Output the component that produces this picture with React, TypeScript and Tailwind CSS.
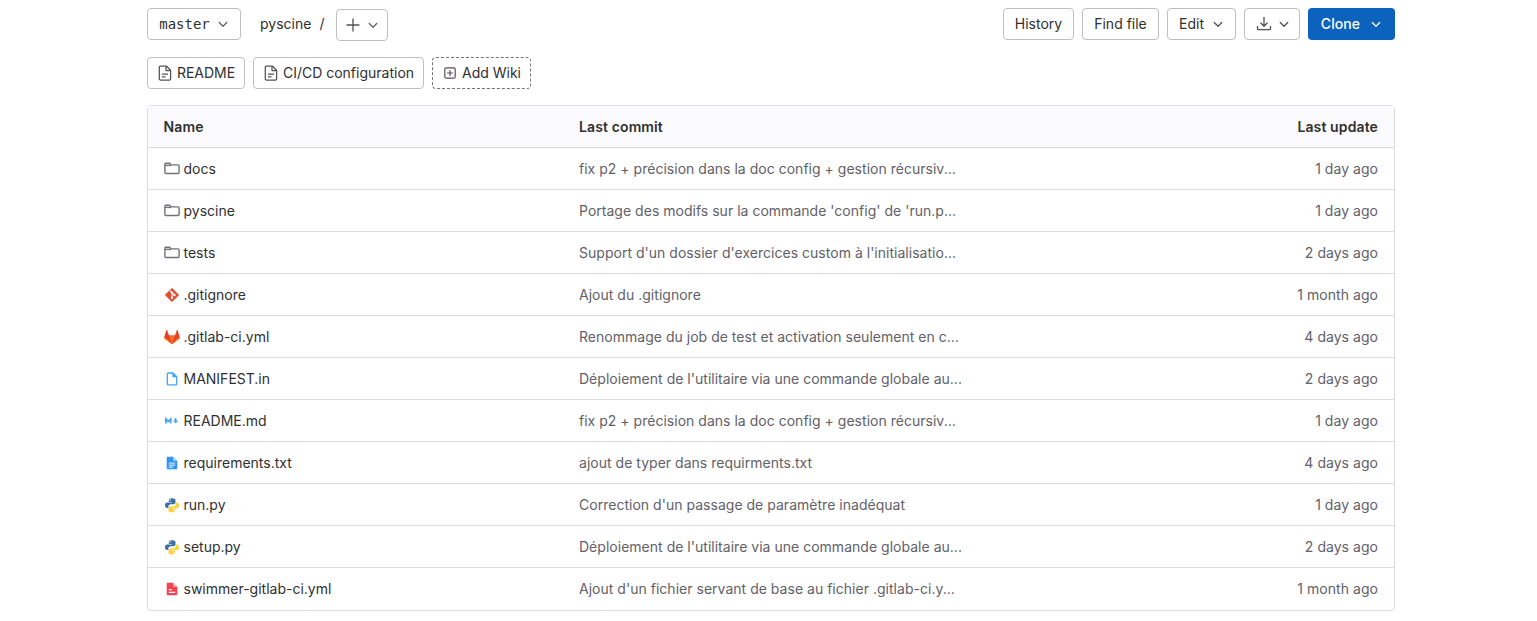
import { ReactNode } from 'react';

const ink = 'text-[#303030]';

function Chevron({ className = '' }: { className?: string }) {
  return (
    <svg viewBox="0 0 16 16" className={`w-3 h-3 ${className}`} fill="none" stroke="currentColor" strokeWidth="1.7" strokeLinecap="round" strokeLinejoin="round">
      <path d="M3 6l5 5 5-5" />
    </svg>
  );
}

function Btn({ children, className = '' }: { children: ReactNode; className?: string }) {
  return (
    <div className={`h-8 flex items-center justify-center rounded border border-[#bfbfc3] bg-white text-sm ${ink} ${className}`}>
      {children}
    </div>
  );
}

function DocIcon() {
  return (
    <svg viewBox="0 0 16 16" className="w-4 h-4 text-[#535158]" fill="none" stroke="currentColor" strokeWidth="1.25" strokeLinejoin="round">
      <path d="M3.4 1h5.9l4.3 4.3v8.6a1.1 1.1 0 0 1-1.1 1.1H3.4a1.1 1.1 0 0 1-1.1-1.1V2.1A1.1 1.1 0 0 1 3.4 1z" />
      <path d="M9 1.2v4.4h4.4" />
      <path d="M5 9h6M5 11.8h3.5" />
    </svg>
  );
}

function FolderIcon() {
  return (
    <svg viewBox="0 0 16 16" className="w-4 h-4 text-[#737278]" fill="none" stroke="currentColor" strokeWidth="1.4" strokeLinejoin="round">
      <path d="M.9 3.2a.9.9 0 0 1 .9-.9h3.8l1.5 1.6h7.1a.9.9 0 0 1 .9.9v6.8a.9.9 0 0 1-.9.9H1.8a.9.9 0 0 1-.9-.9z" />
      <path d="M1 4.4h6" />
    </svg>
  );
}

function GitIcon() {
  return (
    <svg viewBox="0 0 16 16" className="w-4 h-4">
      <path d="M8 1.4L14.6 8 8 14.6 1.4 8z" fill="#e64a2e" stroke="#e64a2e" strokeWidth="1" strokeLinejoin="round" />
      <path d="M5.8 3.6L10.4 8M8 5.8v5" stroke="#fff" strokeWidth="1.1" />
      <circle cx="8" cy="5.8" r="1.2" fill="#fff" />
      <circle cx="10.4" cy="8" r="1.2" fill="#fff" />
      <circle cx="8" cy="10.8" r="1.2" fill="#fff" />
    </svg>
  );
}

function TanukiIcon() {
  return (
    <svg viewBox="0 0 16 16" className="w-4 h-4">
      <path d="M8 15.3L.5 9.7.1 8.4 2.4 1.3c.1-.4.7-.4.8 0L5 6.6h6l1.8-5.3c.1-.4.7-.4.8 0l2.3 7.1-.4 1.3z" fill="#e24329" />
      <path d="M8 15.3L5 6.6h6z" fill="#fc6d26" />
      <path d="M.1 8.4l-.1.9.5.7L8 15.3 3.5 10.8z" fill="#fca326" />
      <path d="M15.9 8.4l.1.9-.5.7L8 15.3l4.5-4.5z" fill="#fca326" />
    </svg>
  );
}

function OutlineFileIcon() {
  return (
    <svg viewBox="0 0 16 16" className="w-4 h-4" fill="none" stroke="#42a5f5" strokeWidth="1.3" strokeLinejoin="round">
      <path d="M4.2 2h4.9l3.6 3.6v7.3a1 1 0 0 1-1 1H4.3a1 1 0 0 1-1-1V3a1 1 0 0 1 .9-1z" />
      <path d="M9 2.2v3.4h3.5" fill="#42a5f5" />
    </svg>
  );
}

function MarkdownIcon() {
  return (
    <svg viewBox="0 0 16 16" className="w-4 h-4" fill="none" stroke="#42a5f5" strokeWidth="1.7">
      <path d="M1.9 10.5V5.8l2.4 2.6 2.4-2.6v4.7" />
      <path d="M11.6 5v3.6" />
      <path d="M9 7.6l2.6 3 2.6-3z" fill="#42a5f5" stroke="none" />
    </svg>
  );
}

function SolidFileIcon() {
  return (
    <svg viewBox="0 0 16 16" className="w-4 h-4">
      <path d="M3.8 1.7h5.4l4.1 4.1v7.4a1.1 1.1 0 0 1-1.1 1.1H3.8a1.1 1.1 0 0 1-1.1-1.1V2.8a1.1 1.1 0 0 1 1.1-1.1z" fill="#2f96f3" />
      <path d="M9.2 1.7v4.1h4.1" fill="#fff" fillOpacity="0.6" />
      <path d="M4.8 8.1h6.4M4.8 10.1h6.4M4.8 12.1h4.2" stroke="#fff" strokeWidth="0.9" />
    </svg>
  );
}

function YamlIcon() {
  return (
    <svg viewBox="0 0 16 16" className="w-4 h-4">
      <path d="M3.8 1.7h5.4l4.1 4.1v7.4a1.1 1.1 0 0 1-1.1 1.1H3.8a1.1 1.1 0 0 1-1.1-1.1V2.8a1.1 1.1 0 0 1 1.1-1.1z" fill="#f44250" />
      <path d="M9.2 1.7v4.1h4.1" fill="#fff" fillOpacity="0.6" />
      <path d="M4.8 8.6h3.2M4.8 11.4h6.4" stroke="#fff" strokeWidth="1.1" />
    </svg>
  );
}

function PythonIcon() {
  return (
    <svg viewBox="0 0 16 16" className="w-4 h-4">
      <path d="M7.9 1.3C5.5 1.3 4.8 2.2 4.8 3.4v1.5h3.3v.6H3.2C1.9 5.5 1 6.5 1 8.2s.9 2.8 2.2 2.8h1.2V9.4c0-1.2 1-2.2 2.2-2.2h3.1c1 0 1.8-.8 1.8-1.9V3.4c0-1.3-1.1-2.1-3.6-2.1z" fill="#3a70a3" />
      <circle cx="6.1" cy="3" r=".7" fill="#fff" />
      <path d="M8.1 15.3c2.4 0 3.1-.9 3.1-2.1v-1.5H7.9v-.6h4.9c1.3 0 2.2-1 2.2-2.7s-.9-2.8-2.2-2.8h-1.2v1.6c0 1.2-1 2.2-2.2 2.2H6.3c-1 0-1.8.8-1.8 1.9v1.9c0 1.3 1.1 2.1 3.6 2.1z" fill="#fdd23e" />
      <circle cx="9.9" cy="13.6" r=".7" fill="#fff" />
    </svg>
  );
}

const rows: { icon: ReactNode; name: string; commit: string; updated: string }[] = [
  { icon: <FolderIcon />, name: 'docs', commit: 'fix p2 + précision dans la doc config + gestion récursiv...', updated: '1 day ago' },
  { icon: <FolderIcon />, name: 'pyscine', commit: "Portage des modifs sur la commande 'config' de 'run.p...", updated: '1 day ago' },
  { icon: <FolderIcon />, name: 'tests', commit: "Support d'un dossier d'exercices custom à l'initialisatio...", updated: '2 days ago' },
  { icon: <GitIcon />, name: '.gitignore', commit: 'Ajout du .gitignore', updated: '1 month ago' },
  { icon: <TanukiIcon />, name: '.gitlab-ci.yml', commit: 'Renommage du job de test et activation seulement en c...', updated: '4 days ago' },
  { icon: <OutlineFileIcon />, name: 'MANIFEST.in', commit: "Déploiement de l'utilitaire via une commande globale au...", updated: '2 days ago' },
  { icon: <MarkdownIcon />, name: 'README.md', commit: 'fix p2 + précision dans la doc config + gestion récursiv...', updated: '1 day ago' },
  { icon: <SolidFileIcon />, name: 'requirements.txt', commit: 'ajout de typer dans requirments.txt', updated: '4 days ago' },
  { icon: <PythonIcon />, name: 'run.py', commit: "Correction d'un passage de paramètre inadéquat", updated: '1 day ago' },
  { icon: <PythonIcon />, name: 'setup.py', commit: "Déploiement de l'utilitaire via une commande globale au...", updated: '2 days ago' },
  { icon: <YamlIcon />, name: 'swimmer-gitlab-ci.yml', commit: "Ajout d'un fichier servant de base au fichier .gitlab-ci.y...", updated: '1 month ago' },
];

export default function App() {
  return (
    <div className="h-[621px] overflow-hidden bg-white font-['Inter','Liberation_Sans',sans-serif] px-[147px] pt-2 w-[1537px]">
      <div className="w-[1248px]">
        <div className="flex items-center h-8">
          <Btn className="w-[94px] gap-[7px]">
            <span className="font-['DejaVu_Sans_Mono','Liberation_Mono',monospace] text-sm">master</span>
            <Chevron className="text-[#626168]" />
          </Btn>
          <span className={`ml-[19px] text-sm ${ink}`}>pyscine</span>
          <span className={`ml-[8px] text-sm ${ink}`}>/</span>
          <Btn className="ml-[12px] w-[52px] gap-[6px] mt-[2px]">
            <svg viewBox="0 0 16 16" className="w-4 h-4 text-[#535158]" fill="none" stroke="currentColor" strokeWidth="1.3" strokeLinecap="round">
              <path d="M8 2v12M2 8h12" />
            </svg>
            <Chevron className="text-[#626168]" />
          </Btn>
          <div className="ml-auto flex items-center gap-2">
            <Btn className="w-[71px]">History</Btn>
            <Btn className="w-[77px]">Find file</Btn>
            <Btn className="w-[69px] gap-2">
              Edit
              <Chevron className="text-[#535158]" />
            </Btn>
            <Btn className="w-[56px] gap-[6px] pl-[1px]">
              <svg viewBox="0 0 16 16" className="w-4 h-4 text-[#535158]" fill="none" stroke="currentColor" strokeWidth="1.3" strokeLinecap="round" strokeLinejoin="round">
                <path d="M8 1.5v8.5M4.8 7L8 10.2 11.2 7M1.5 10.5v2.2a1 1 0 0 0 1 1h11a1 1 0 0 0 1-1v-2.2" />
              </svg>
              <Chevron className="text-[#535158]" />
            </Btn>
            <div className="w-[87px] h-8 flex items-center justify-center gap-[10px] rounded bg-[#0b63bd] text-sm font-medium tracking-[0.1px] text-white">
              Clone
              <Chevron />
            </div>
          </div>
        </div>

        <div className="flex items-center gap-2 mt-[17px]">
          <Btn className="w-[98px] gap-1">
            <DocIcon />
            README
          </Btn>
          <Btn className="w-[171px] gap-1">
            <DocIcon />
            CI/CD configuration
          </Btn>
          <div className={`w-[99px] h-8 flex items-center justify-center gap-1 rounded border border-dashed border-[#737278] text-sm ${ink}`}>
            <svg viewBox="0 0 16 16" className="w-4 h-4 text-[#535158]" fill="none" stroke="currentColor" strokeWidth="1.2" strokeLinecap="round">
              <rect x="2.8" y="2.8" width="10.4" height="10.4" rx="1.5" />
              <path d="M8 5.5v5M5.5 8h5" />
            </svg>
            Add Wiki
          </div>
        </div>

        <div className="mt-4 rounded border border-[#dcdcde] text-sm">
          <div className="h-[42px] flex items-center px-4 bg-[#fbfafd] border-b border-[#dcdcde] font-semibold tracking-[0.12px] text-[#303030]">
            <div className="w-[415px] -ml-[0.5px]">Name</div>
            <div className="flex-1 ml-[0.5px]">Last commit</div>
            <div>Last update</div>
          </div>
          {rows.map((row, i) => (
            <div key={row.name} className={`h-[42px] flex items-center px-4 ${i < rows.length - 1 ? 'border-b border-[#dcdcde]' : ''}`}>
              <div className="w-[415px] flex items-center gap-[3.5px]">
                {row.icon}
                <span className="text-[#303030]">{row.name}</span>
              </div>
              <div className="flex-1 text-[#626168] tracking-[0.02px]">{row.commit}</div>
              <div className="text-[#626168] tracking-[0.04px]">{row.updated}</div>
            </div>
          ))}
        </div>
      </div>
    </div>
  );
}
